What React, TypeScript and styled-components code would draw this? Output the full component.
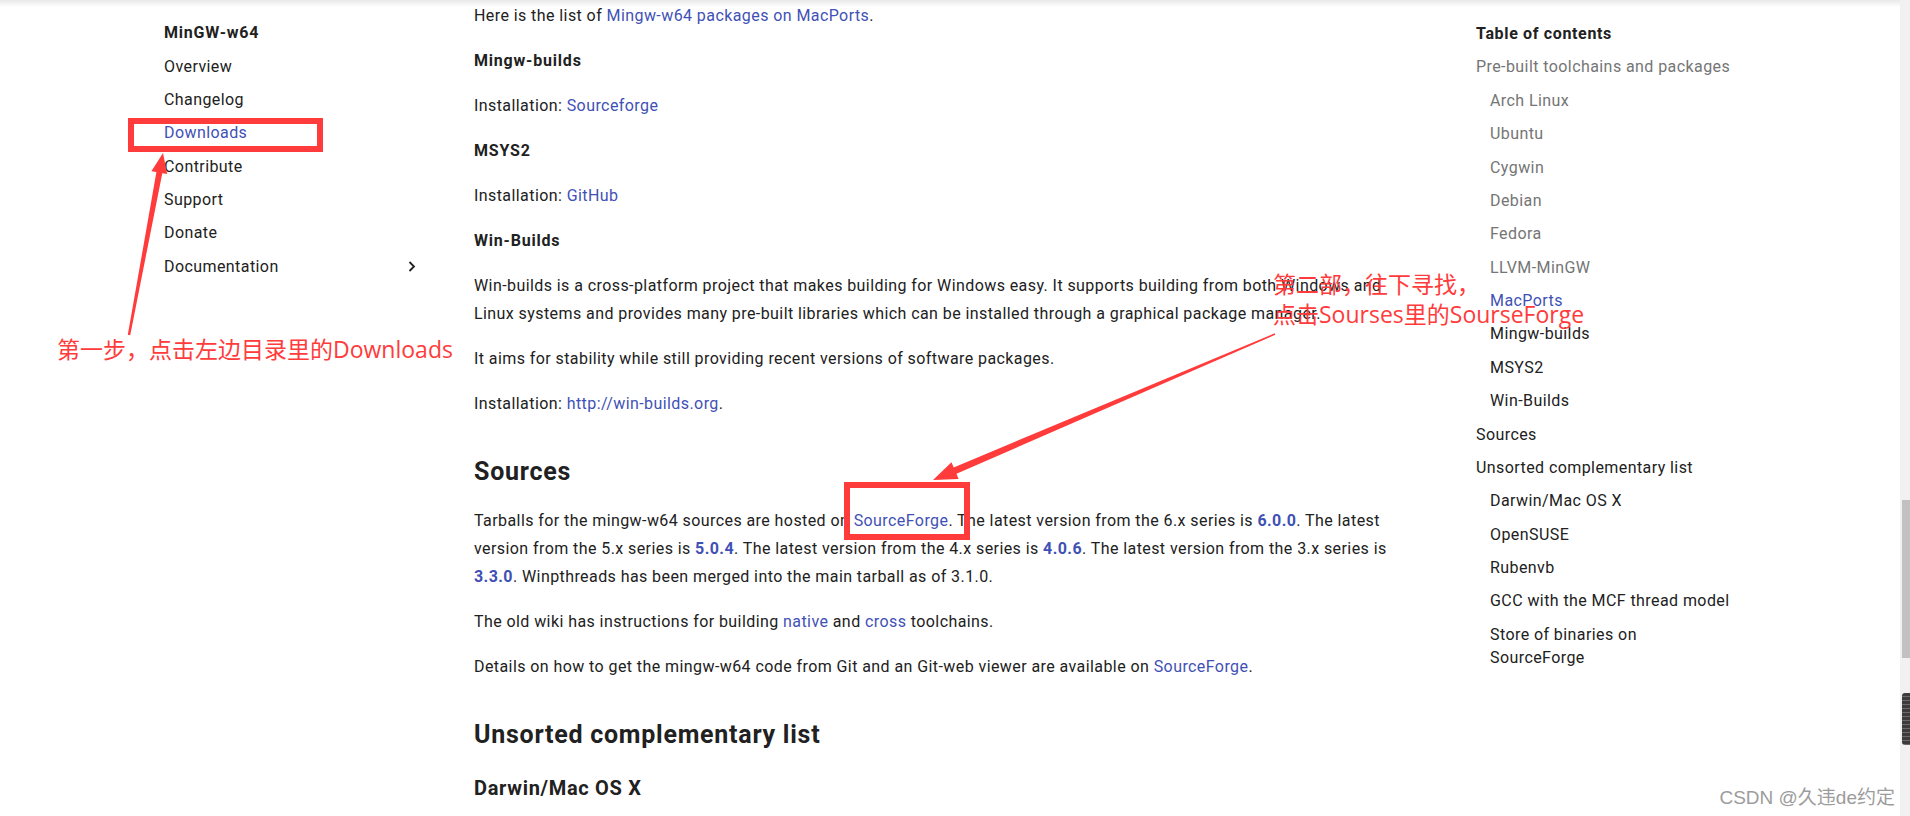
import styled, { createGlobalStyle } from 'styled-components'

const GlobalStyle = createGlobalStyle`
  html, body {
    margin: 0;
    padding: 0;
    background: #fff;
    overflow: hidden;
  }
  body {
    font-family: Roboto, "Noto Sans", "Liberation Sans", sans-serif;
    color: #212121;
    letter-spacing: 0.42px;
  }
`

const colors = {
  text: '#212121',
  link: '#3f51b5',
  passed: '#757575',
  red: '#ff3b3b',
}

const Page = styled.div`
  position: relative;
  width: 1910px;
  height: 816px;
  overflow: hidden;
`

const TopShadow = styled.div`
  position: absolute;
  top: 0;
  left: 0;
  right: 10px;
  height: 7px;
  background: linear-gradient(to bottom, rgba(0, 0, 0, 0.09), rgba(0, 0, 0, 0));
`

const Layout = styled.div`
  display: flex;
  padding-left: 164px;
`

const Sidebar = styled.nav`
  width: 310px;
  flex: none;
  padding-top: 16px;
`

const NavList = styled.ul`
  list-style: none;
  margin: 0;
  padding: 0;
  width: 256px;
`

const NavTitle = styled.li`
  font-size: 16px;
  font-weight: 700;
  letter-spacing: 0.8px;
  line-height: 23px;
  padding: 5.2px 0;
`

const NavItem = styled.li<{ $active?: boolean }>`
  display: flex;
  align-items: center;
  justify-content: space-between;
  font-size: 16px;
  line-height: 23px;
  padding: 5.2px 0;
  color: ${(p) => (p.$active ? colors.link : colors.text)};
`

const Chevron = styled.svg`
  width: 8px;
  height: 11px;
  margin-right: 4px;
`

const Main = styled.main`
  width: 1002px;
  flex: none;
`

const Article = styled.article`
  width: 922px;
  padding-top: 2px;
  font-size: 16px;
  line-height: 28px;
`

const P = styled.p`
  margin: 0 0 17px;
`

const H2 = styled.h2`
  font-size: 25px;
  font-weight: 700;
  letter-spacing: 0.75px;
  line-height: 36px;
  margin: 36px 0 17px;
`

const H3 = styled.h3`
  font-size: 20px;
  font-weight: 700;
  letter-spacing: 0.7px;
  line-height: 30px;
  margin: 20px 0 17px;
`

const H4 = styled.h4`
  font-size: 16px;
  font-weight: 700;
  letter-spacing: 0.8px;
  line-height: 28px;
  margin: 0 0 17px;
`

const A = styled.a<{ $strong?: boolean }>`
  color: ${colors.link};
  text-decoration: none;
  font-weight: ${(p) => (p.$strong ? 700 : 400)};
`

const Toc = styled.nav`
  width: 260px;
  flex: none;
  padding-top: 16px;
`

const TocTitle = styled.div`
  font-size: 16px;
  font-weight: 700;
  letter-spacing: 0.65px;
  line-height: 23px;
  padding: 6px 0 5.2px;
`

const TocItem = styled.div<{ $nested?: boolean; $state?: 'passed' | 'active' }>`
  font-size: 16px;
  line-height: 23px;
  padding: 5.2px 0 5.2px ${(p) => (p.$nested ? '14px' : '0')};
  color: ${(p) =>
    p.$state === 'passed' ? colors.passed : p.$state === 'active' ? colors.link : colors.text};
`

/* annotations drawn over the page */
const Overlay = styled.svg`
  position: absolute;
  inset: 0;
  pointer-events: none;
`

const RedBox = styled.div<{ $x: number; $y: number; $w: number; $h: number }>`
  position: absolute;
  left: ${(p) => p.$x}px;
  top: ${(p) => p.$y}px;
  width: ${(p) => p.$w}px;
  height: ${(p) => p.$h}px;
  box-sizing: border-box;
  border: 6px solid ${colors.red};
`

const Note = styled.div<{ $x: number; $y: number }>`
  position: absolute;
  left: ${(p) => p.$x}px;
  top: ${(p) => p.$y}px;
  font-family: "Open Sans", "Noto Sans CJK SC", sans-serif;
  font-size: 23px;
  letter-spacing: 0;
  line-height: 30px;
  color: ${colors.red};
  white-space: nowrap;
`

const Watermark = styled.div`
  position: absolute;
  right: 15px;
  top: 786px;
  font-family: "Liberation Sans", "Noto Sans CJK SC", sans-serif;
  font-size: 19px;
  letter-spacing: 0;
  line-height: 24px;
  color: #9c9c9c;
  text-shadow: 0 0 2px #fff;
`

const ScrollTrack = styled.div`
  position: absolute;
  top: 0;
  right: 0;
  width: 10px;
  height: 816px;
  background: #f1f1f1;
`

const ScrollThumb = styled.div`
  position: absolute;
  top: 500px;
  left: 2px;
  right: 0;
  height: 158px;
  background: #c1c1c1;
`

const SideWidget = styled.div`
  position: absolute;
  top: 693px;
  left: 2px;
  right: 0;
  height: 52px;
  background: #3c3c3c;
  border-radius: 3px 0 0 3px;
  background-image: repeating-linear-gradient(
    to bottom,
    transparent 0 3px,
    #6a6a6a 3px 4px
  );
`

const navItems = ['Overview', 'Changelog', 'Downloads', 'Contribute', 'Support', 'Donate']

const tocItems: { label: string; nested?: boolean; state?: 'passed' | 'active' }[] = [
  { label: 'Pre-built toolchains and packages', state: 'passed' },
  { label: 'Arch Linux', nested: true, state: 'passed' },
  { label: 'Ubuntu', nested: true, state: 'passed' },
  { label: 'Cygwin', nested: true, state: 'passed' },
  { label: 'Debian', nested: true, state: 'passed' },
  { label: 'Fedora', nested: true, state: 'passed' },
  { label: 'LLVM-MinGW', nested: true, state: 'passed' },
  { label: 'MacPorts', nested: true, state: 'active' },
  { label: 'Mingw-builds', nested: true },
  { label: 'MSYS2', nested: true },
  { label: 'Win-Builds', nested: true },
  { label: 'Sources' },
  { label: 'Unsorted complementary list' },
  { label: 'Darwin/Mac OS X', nested: true },
  { label: 'OpenSUSE', nested: true },
  { label: 'Rubenvb', nested: true },
  { label: 'GCC with the MCF thread model', nested: true },
]

export default function App() {
  return (
    <Page>
      <GlobalStyle />
      <Layout>
        <Sidebar>
          <NavList>
            <NavTitle>MinGW-w64</NavTitle>
            {navItems.map((item) => (
              <NavItem key={item} $active={item === 'Downloads'}>
                {item}
              </NavItem>
            ))}
            <NavItem>
              Documentation
              <Chevron viewBox="0 0 8 11">
                <polyline points="1.5,1 6,5.5 1.5,10" fill="none" stroke="#212121" strokeWidth="1.8" />
              </Chevron>
            </NavItem>
          </NavList>
        </Sidebar>

        <Main>
          <Article>
            <P>
              Here is the list of <A>Mingw-w64 packages on MacPorts</A>.
            </P>
            <H4>Mingw-builds</H4>
            <P>
              Installation: <A>Sourceforge</A>
            </P>
            <H4>MSYS2</H4>
            <P>
              Installation: <A>GitHub</A>
            </P>
            <H4>Win-Builds</H4>
            <P>
              Win-builds is a cross-platform project that makes building for Windows easy. It
              supports building from both Windows and Linux systems and provides many pre-built
              libraries which can be installed through a graphical package manager.
            </P>
            <P>It aims for stability while still providing recent versions of software packages.</P>
            <P>
              Installation: <A>http://win-builds.org</A>.
            </P>

            <H2>Sources</H2>
            <P>
              Tarballs for the mingw-w64 sources are hosted on <A>SourceForge</A>. The latest
              version from the 6.x series is <A $strong>6.0.0</A>. The latest version from the 5.x
              series is <A $strong>5.0.4</A>. The latest version from the 4.x series is{' '}
              <A $strong>4.0.6</A>. The latest version from the 3.x series is <A $strong>3.3.0</A>.
              Winpthreads has been merged into the main tarball as of 3.1.0.
            </P>
            <P>
              The old wiki has instructions for building <A>native</A> and <A>cross</A> toolchains.
            </P>
            <P>
              Details on how to get the mingw-w64 code from Git and an Git-web viewer are available
              on <A>SourceForge</A>.
            </P>

            <H2>Unsorted complementary list</H2>
            <H3>Darwin/Mac OS X</H3>
          </Article>
        </Main>

        <Toc>
          <TocTitle>Table of contents</TocTitle>
          {tocItems.map((t) => (
            <TocItem key={t.label} $nested={t.nested} $state={t.state}>
              {t.label}
            </TocItem>
          ))}
          <TocItem $nested>
            Store of binaries on
            <br />
            SourceForge
          </TocItem>
        </Toc>
      </Layout>

      <TopShadow />

      <RedBox $x={128} $y={118} $w={195} $h={34} />
      <RedBox $x={844} $y={482} $w={126} $h={58} />

      <Overlay width="1910" height="816" viewBox="0 0 1910 816">
        <polygon
          fill={colors.red}
          points="163,153 167.2,174.1 162.3,173.2 130.2,335.2 127.8,334.8 156.4,172.1 151.4,171.2"
        />
        <polygon
          fill={colors.red}
          points="933,480 958.6,478.9 956.5,473.8 1275.3,334.7 1274.7,333.3 953.7,467.4 951.5,462.3"
        />
      </Overlay>

      <Note $x={57} $y={334}>第一步，点击左边目录里的Downloads</Note>
      <Note $x={1273} $y={269}>
        第二部，往下寻找，
        <br />
        点击Sourses里的SourseForge
      </Note>

      <Watermark>CSDN @久违de约定</Watermark>

      <ScrollTrack>
        <ScrollThumb />
        <SideWidget />
      </ScrollTrack>
    </Page>
  )
}
